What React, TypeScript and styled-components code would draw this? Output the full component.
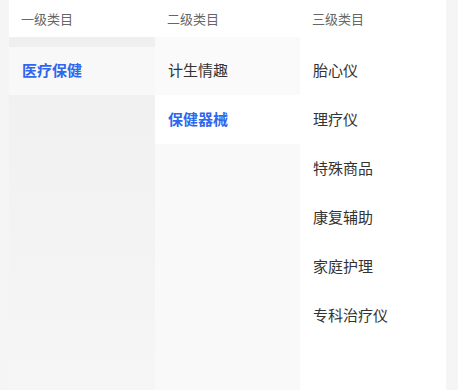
import React from 'react'
import styled, { createGlobalStyle } from 'styled-components'

type TColumn = {
  title: string
  items: string[]
  active: number
  tone: 'first' | 'second' | 'third'
}

const columns: TColumn[] = [
  { title: '一级类目', items: ['医疗保健'], active: 0, tone: 'first' },
  { title: '二级类目', items: ['计生情趣', '保健器械'], active: 1, tone: 'second' },
  {
    title: '三级类目',
    items: ['胎心仪', '理疗仪', '特殊商品', '康复辅助', '家庭护理', '专科治疗仪'],
    active: -1,
    tone: 'third',
  },
]

const listBg = {
  first: 'linear-gradient(#efefef 0 10px, #f8f8f8 10px 58px, #f1f1f1 58px, #f3f3f3 60%, #f6f6f6 100%)',
  second: 'linear-gradient(#fafafa 0 58px, #fff 58px 107px, #f9f9f9 107px)',
  third: '#fff',
}

const App = () => {
  return (
    <>
      <GlobalStyle />
      <Page>
        <Edge />
        {columns.map((col) => (
          <Column key={col.title}>
            <Header>{col.title}</Header>
            <List $tone={col.tone}>
              {col.items.map((item, index) => (
                <Item key={item} $active={index === col.active}>
                  {item}
                </Item>
              ))}
            </List>
          </Column>
        ))}
        <Edge $wide />
      </Page>
    </>
  )
}

export default App

const GlobalStyle = createGlobalStyle`
  html, body {
    margin: 0;
    padding: 0;
    background: #fff;
  }
  body {
    font-family: "Noto Sans CJK SC", "Noto Sans", sans-serif;
  }
`

const Page = styled.div`
  display: flex;
  width: 458px;
  height: 390px;
  overflow: hidden;
`

const Edge = styled.div<{ $wide?: boolean }>`
  flex: 0 0 ${(p) => (p.$wide ? '12px' : '9px')};
  background: #f5f5f5;
`

const Column = styled.div`
  display: flex;
  flex-direction: column;
  flex: 0 0 146px;
  &:nth-child(3) {
    flex-basis: 145px;
  }
`

const Header = styled.div`
  height: 37px;
  display: flex;
  align-items: center;
  padding: 0 12px;
  font-size: 13px;
  color: #666;
  background: #fff;
`

const List = styled.div<{ $tone: TColumn['tone'] }>`
  flex: 1;
  padding-top: 10px;
  background: ${(p) => listBg[p.$tone]};
`

const Item = styled.div<{ $active: boolean }>`
  height: 49px;
  box-sizing: border-box;
  display: flex;
  align-items: center;
  padding: 0 13px 4px;
  font-size: 15px;
  color: ${(p) => (p.$active ? '#2f66ee' : '#333')};
  font-weight: ${(p) => (p.$active ? 600 : 400)};
`
